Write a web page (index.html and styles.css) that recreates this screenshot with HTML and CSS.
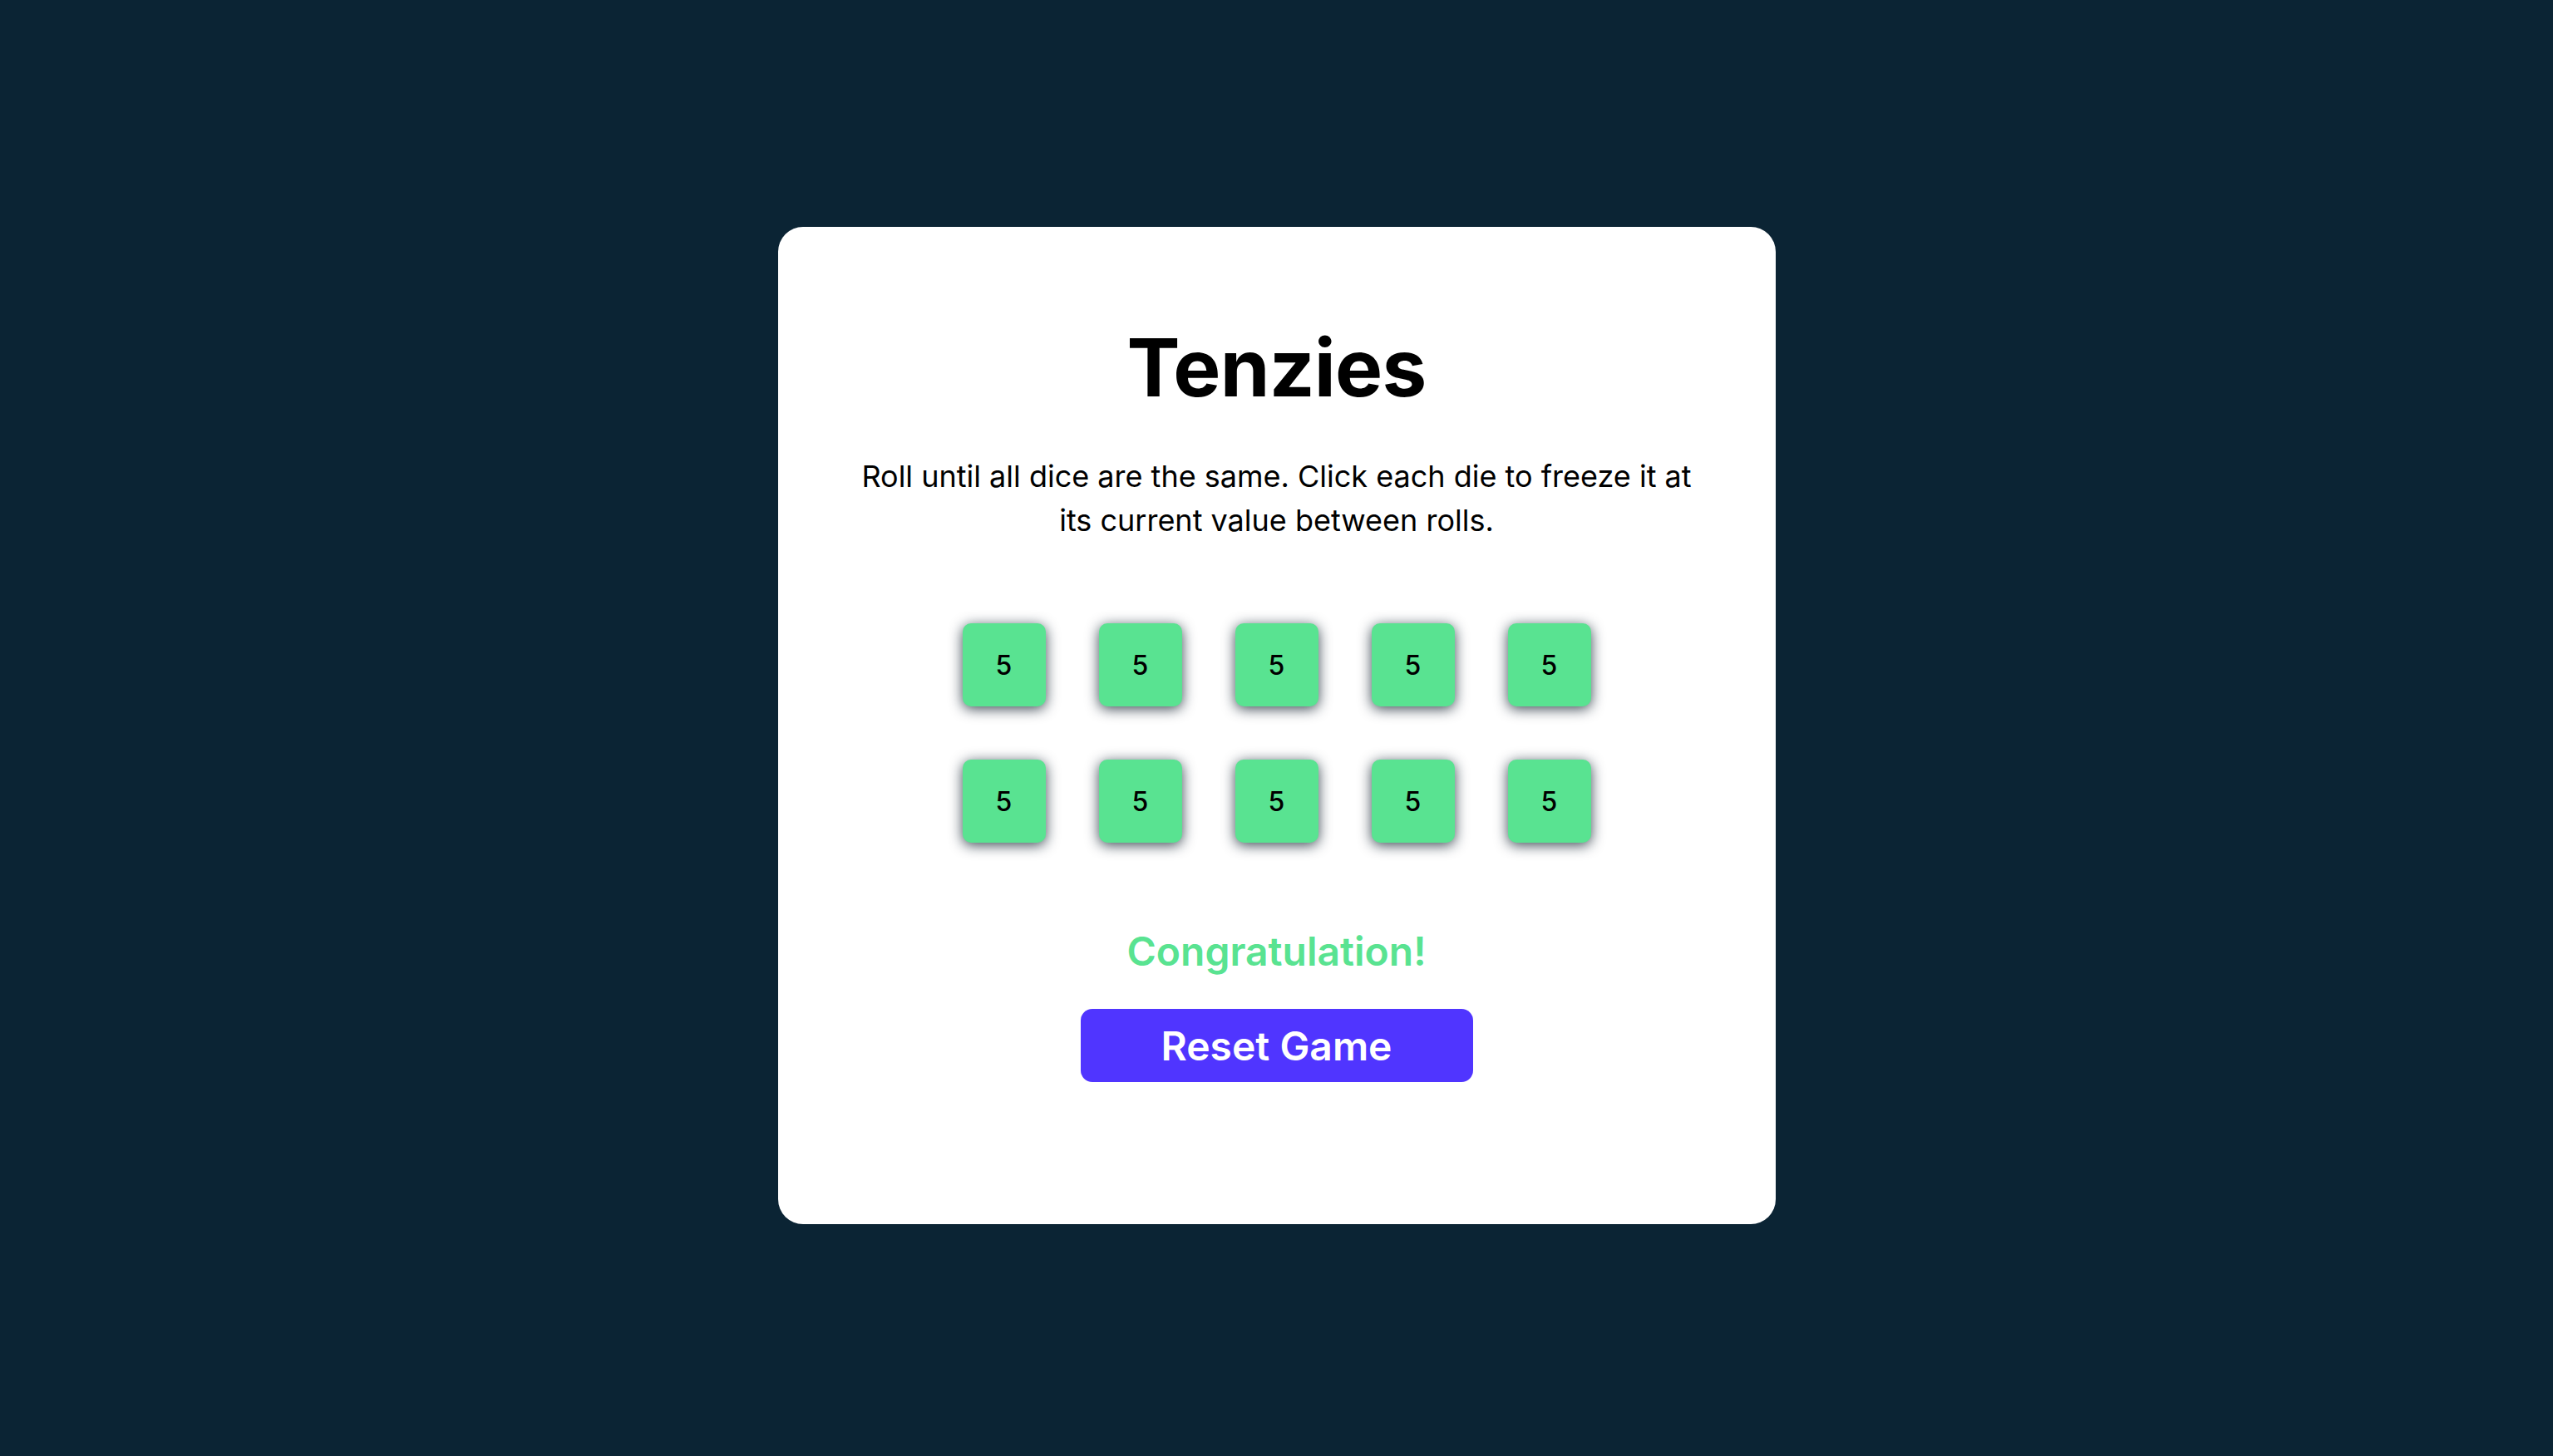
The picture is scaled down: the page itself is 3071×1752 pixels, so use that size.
FILE: index.html
```html
<!DOCTYPE html>
<html lang="en">
<head>
<meta charset="utf-8">
<title>Tenzies</title>
<link rel="stylesheet" href="styles.css">
</head>
<body>
<main class="card">
  <h1 class="title">Tenzies</h1>
  <p class="instructions">Roll until all dice are the same. Click each die to freeze it at its current value between rolls.</p>
  <div class="dice">
    <button class="die">5</button>
    <button class="die">5</button>
    <button class="die">5</button>
    <button class="die">5</button>
    <button class="die">5</button>
    <button class="die">5</button>
    <button class="die">5</button>
    <button class="die">5</button>
    <button class="die">5</button>
    <button class="die">5</button>
  </div>
  <p class="congrats">Congratulation!</p>
  <button class="reset">Reset Game</button>
</main>
</body>
</html>
```

FILE: styles.css
```css
* {
  box-sizing: border-box;
}

html, body {
  margin: 0;
  padding: 0;
}

body {
  background: #0b2434;
  min-height: 100vh;
  display: flex;
  align-items: center;
  justify-content: center;
  padding-bottom: 6px;
  font-family: Inter, "Noto Sans", sans-serif;
}

.card {
  width: 1200px;
  height: 1200px;
  background: #ffffff;
  border-radius: 30px;
  padding: 111px 90px 0;
  display: flex;
  flex-direction: column;
  align-items: center;
}

.title {
  margin: 0;
  font-size: 96px;
  line-height: 116px;
  font-weight: 700;
  letter-spacing: -0.8px;
  color: #000;
}

.instructions {
  margin: 47px 0 0;
  font-size: 36px;
  line-height: 53px;
  font-weight: 400;
  text-align: center;
  color: #000;
  max-width: 1012px;
}

.dice {
  margin-top: 97px;
  display: grid;
  grid-template-columns: repeat(5, 100px);
  grid-auto-rows: 100px;
  gap: 64px;
}

.die {
  width: 100px;
  height: 100px;
  border: none;
  border-radius: 10px;
  background: #59e391;
  box-shadow: 0 3px 16px rgba(11, 26, 40, 0.8);
  font-family: Inter, "Noto Sans", sans-serif;
  font-size: 32px;
  font-weight: 500;
  color: #000;
  padding: 0;
  display: flex;
  align-items: center;
  justify-content: center;
}

.congrats {
  margin: 102px 0 0;
  font-size: 48px;
  line-height: 58px;
  font-weight: 600;
  color: #59e391;
}

.reset {
  margin-top: 40px;
  width: 472px;
  height: 88px;
  border: none;
  border-radius: 14px;
  background: #5035ff;
  color: #fff;
  font-family: Inter, "Noto Sans", sans-serif;
  font-size: 48px;
  font-weight: 600;
  padding: 0;
}
```
